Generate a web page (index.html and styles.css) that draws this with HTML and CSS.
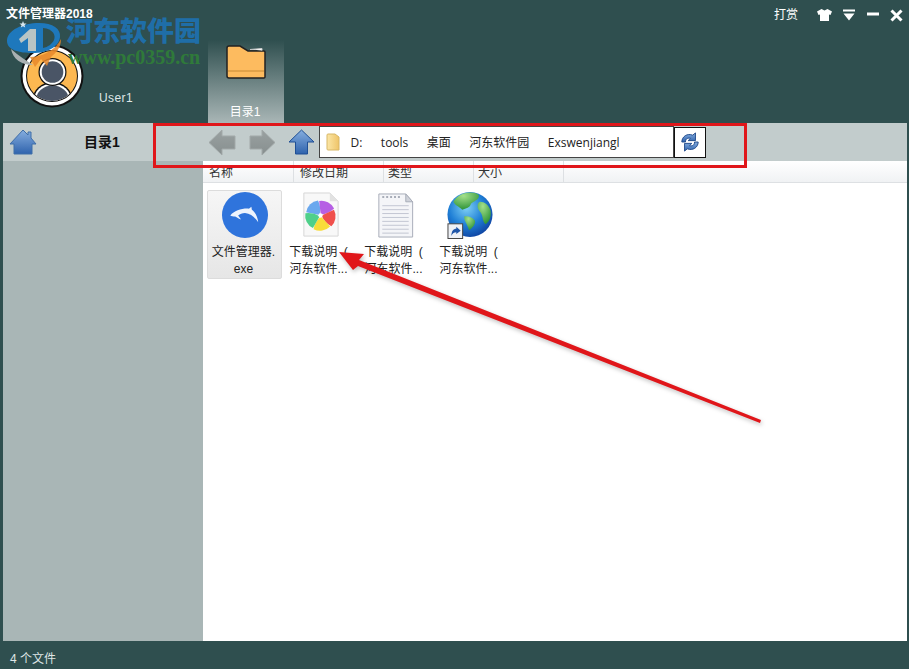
FILE: index.html
```html
<!DOCTYPE html>
<html lang="zh-CN">
  <head>
    <meta charset="UTF-8" />
    <title>文件管理器2018</title>
    <link rel="stylesheet" href="styles.css">
  </head>
  <body>
    <div class="app">
      <header class="top">
        <div class="title-row">
          <span class="app-title">文件管理器2018</span>
          <div class="win-btns">
            <span class="tip">打赏</span>
            <svg class="win-ico" width="15" height="12" viewBox="0 0 15 12"><path d="M4.500 0 L7.500 1.500 L10.500 0 L15 2.500 L13.500 6 L12 5.500 V12 H3 V5.500 L1.500 6 L0 2.500Z" fill="#fff"/></svg>
            <svg class="win-ico" width="12" height="12" viewBox="0 0 12 12"><path d="M0 0.500H12V2.500H0ZM0.500 4.500H11.500L6 11.500Z" fill="#fff"/></svg>
            <svg class="win-ico" width="12" height="12" viewBox="0 0 12 12"><path d="M0 3.500H12V6.500H0Z" fill="#fff"/></svg>
            <svg class="win-ico" width="13" height="13" viewBox="0 0 13 13"><path d="M1.500 1.500L11.500 11.500M11.500 1.500L1.500 11.500" stroke="#fff" stroke-width="3"/></svg>
          </div>
        </div>
        <div class="user-row">
          <div class="user">
            <svg class="avatar" width="64" height="64" viewBox="0 0 64 64">
              <defs>
                <clipPath id="faceClip"><circle cx="32" cy="32" r="25"/></clipPath>
              </defs>
              <circle cx="32" cy="32" r="31.500" fill="#111"/>
              <circle cx="32" cy="32" r="29.500" fill="#fff"/>
              <circle cx="32" cy="32" r="26" fill="#111"/>
              <circle cx="32" cy="32" r="25" fill="#fdb851"/>
              <g clip-path="url(#faceClip)">
                <ellipse cx="32.500" cy="56" rx="20" ry="18" fill="#111"/>
                <ellipse cx="32.500" cy="56" rx="18.500" ry="16.500" fill="#fff"/>
                <ellipse cx="32.500" cy="56" rx="16.500" ry="14.500" fill="#4a5566"/>
              </g>
              <circle cx="32.500" cy="28" r="14" fill="#111"/>
              <circle cx="32.500" cy="28" r="12.800" fill="#fff"/>
              <circle cx="32.500" cy="28" r="10.800" fill="#4a5566"/>
            </svg>
            <span class="user-name">User1</span>
          </div>
          <div class="tab">
            <svg width="40" height="34" viewBox="0 0 40 34">
              <path d="M1 3 Q1 1 3 1 H14 L22 6 H38 Q39 6 39 7 V32 Q39 33 38 33 H3 Q1 33 1 31Z" fill="#fdbb5f" stroke="#222" stroke-width="1.500"/>
              <path d="M2 26 H38" stroke="#d99a42" stroke-width="1.500"/>
              <path d="M24 4.500 L36 3.500 V5.500" fill="#fff" stroke="#ccc" stroke-width="1"/>
            </svg>
            <span class="tab-label">目录1</span>
          </div>
        </div>
      </header>

      <div class="main">
        <aside class="side">
          <div class="side-head">
            <svg width="28" height="26" viewBox="0 0 28 26">
              <defs>
                <linearGradient id="blueV" x1="0" y1="0" x2="0" y2="1">
                  <stop offset="0" stop-color="#86aedf"/>
                  <stop offset="1" stop-color="#2f63ad"/>
                </linearGradient>
                <linearGradient id="greyV" x1="0" y1="0" x2="0" y2="1">
                  <stop offset="0" stop-color="#9aa1a1"/>
                  <stop offset="1" stop-color="#878f8f"/>
                </linearGradient>
                <linearGradient id="folderH" x1="0" y1="0" x2="1" y2="0">
                  <stop offset="0" stop-color="#fbe6a6"/>
                  <stop offset="1" stop-color="#efc468"/>
                </linearGradient>
                <radialGradient id="globeFill" cx=".42" cy=".35" r=".7">
                  <stop offset="0" stop-color="#7fd0f5"/>
                  <stop offset=".55" stop-color="#1f7fd6"/>
                  <stop offset="1" stop-color="#0e3f9e"/>
                </radialGradient>
                <radialGradient id="landFill" cx=".4" cy=".2" r=".9">
                  <stop offset="0" stop-color="#a4e08a"/>
                  <stop offset="1" stop-color="#1f8a2e"/>
                </radialGradient>
              </defs>
              <path d="M14 1 L19 6 V3 H22 V9 L27 15 H23 V25 H5 V15 H1Z" fill="url(#blueV)" stroke="#3f6ea8"/>
            </svg>
            <span class="side-title">目录1</span>
          </div>
        </aside>

        <section class="content">
          <div class="toolbar">
            <div class="nav">
              <svg width="28" height="27" viewBox="0 0 28 27"><path d="M1 13.500 L14 1 V7 H27 V20 H14 V26Z" fill="url(#greyV)" stroke="#a2a9a9"/></svg>
              <svg width="27" height="27" viewBox="0 0 27 27"><path d="M26 13.500 L13 1 V7 H1 V20 H13 V26Z" fill="url(#greyV)" stroke="#a2a9a9"/></svg>
              <svg class="nav-up" width="27" height="26" viewBox="0 0 27 26"><path d="M13.500 1 L26 13 H19.500 V25 H7.500 V13 H1Z" fill="url(#blueV)" stroke="#1f4f95"/></svg>
            </div>
            <div class="path-box">
              <svg class="path-folder" width="14" height="18" viewBox="0 0 14 18"><path d="M1 2 Q1 1 2 1 H9 L13 4 V17 H2 Q1 17 1 16Z" fill="url(#folderH)" stroke="#d8b766"/></svg>
              <span>D:</span>
              <span>tools</span>
              <span>桌面</span>
              <span>河东软件园</span>
              <span>Exswenjiangl</span>
            </div>
            <button class="refresh">
              <svg width="20" height="20" viewBox="0 0 22 22">
                <path d="M2 11 C2 5 8 1 14 3.500 L17 1 V9.500 H9 L11.500 7 C8 6 6 8 6 11Z" fill="url(#blueV)" stroke="#1c4688" stroke-width="1"/>
                <path d="M20 11 C20 17 14 21 8 18.500 L5 21 V12.500 H13 L10.500 15 C14 16 16 14 16 11Z" fill="url(#blueV)" stroke="#1c4688" stroke-width="1"/>
              </svg>
            </button>
          </div>

          <div class="columns">
            <div class="col col-name">名称</div>
            <div class="col col-date">修改日期</div>
            <div class="col col-type">类型</div>
            <div class="col col-size">大小</div>
          </div>

          <div class="files">
            <div class="file selected">
              <svg width="48" height="48" viewBox="0 0 48 48">
                <circle cx="24" cy="23.500" r="23.500" fill="#2f74dc"/>
                <path d="M9 24 C13 19 21 16.500 28 17 L30.500 15 L31 18 C35 21 37 26 37.500 31 C34 26 30 22 24 21.500 C21 21.500 19 22.500 17 24 L20 28 C17 27 15 25.500 14 25 C12 25 10 25 9 24Z" fill="#fff" opacity=".92"/>
              </svg>
              <div class="file-name">文件管理器.<br>exe</div>
            </div>
            <div class="file">
              <svg width="48" height="48" viewBox="0 0 48 48">
                <path d="M7.500 1 H34 L42.500 9.500 V45 H7.500Z" fill="#f8f8f8" stroke="#d6d6d6"/>
                <path d="M34 1 V9.500 H42.500Z" fill="#e2e2e2"/>
                <g transform="translate(24.500 24) scale(1.100)">
                  <path d="M0 -1 L-4 -13 A 13 13 0 0 1 11 -9 Q 7 -3 0 -1Z" fill="#6aa8ee" transform="rotate(-60)"/>
                  <path d="M0 -1 L-4 -13 A 13 13 0 0 1 11 -9 Q 7 -3 0 -1Z" fill="#b65fe4" transform="rotate(12)"/>
                  <path d="M0 -1 L-4 -13 A 13 13 0 0 1 11 -9 Q 7 -3 0 -1Z" fill="#f0504c" transform="rotate(84)"/>
                  <path d="M0 -1 L-4 -13 A 13 13 0 0 1 11 -9 Q 7 -3 0 -1Z" fill="#f8dc3a" transform="rotate(156)"/>
                  <path d="M0 -1 L-4 -13 A 13 13 0 0 1 11 -9 Q 7 -3 0 -1Z" fill="#4fd08a" transform="rotate(228)"/>
                  <circle r="2" fill="#fff"/>
                </g>
              </svg>
              <div class="file-name">下载说明&nbsp; (<br>河东软件...</div>
            </div>
            <div class="file">
              <svg width="48" height="48" viewBox="0 0 48 48">
                <path d="M7.500 2 H35 L42 10 V46 H7.500Z" fill="#f4f5f8" stroke="#a8adb8"/>
                <path d="M35 2 V10 H42Z" fill="#cfd2da" stroke="#a8adb8"/>
                <path d="M11 14H38M11 18H38M11 22H38M11 26H38M11 30H38M11 34H38M11 38H38M11 42H38" stroke="#c2c6d2"/>
                <path d="M11 5H31" stroke="#a8adb8" stroke-dasharray="2 2" stroke-width="2"/>
              </svg>
              <div class="file-name">下载说明&nbsp; (<br>河东软件...</div>
            </div>
            <div class="file">
              <svg width="48" height="48" viewBox="0 0 48 48">
                <circle cx="24" cy="23" r="23" fill="url(#globeFill)"/>
                <path d="M11 5 C17 0 28 -1 33 3 C34 8 28 9 25 12 C24 16 20 17 16 18 C13 15 9 14 7 10 C8 8 9 7 11 5Z" fill="url(#landFill)"/>
                <path d="M34 10 C39 10 43 13 45 19 C46 25 44 30 40 33 C36 30 38 24 34 20 C31 16 31 12 34 10Z" fill="url(#landFill)"/>
                <path d="M18 25 C22 24 27 26 29 29 C30 33 26 37 23 39 C22 34 18 30 18 25Z" fill="url(#landFill)"/>
                <rect x="1.500" y="32.500" width="15" height="15" fill="#eef1f6" stroke="#444"/>
                <path d="M5 45 C5 40 7 37.500 10 37.500 V35.500 L14.500 39.500 L10 43 V41 C8 41 6 42 5 45Z" fill="#1f55a8"/>
              </svg>
              <div class="file-name">下载说明&nbsp; (<br>河东软件...</div>
            </div>
          </div>
        </section>
      </div>

      <footer class="status">4 个文件</footer>
    </div>

    <!-- watermark and annotation lie over the app -->
    <div class="mark">
      <svg class="mark-logo" width="58" height="50" viewBox="0 0 58 50">
        <path d="M6 30 C8 40 16 46 28 46 C22 42 14 37 6 30Z" fill="#a9b0b2"/>
        <path d="M2 22 C2 11 18 4 34 4 C48 4 56 10 55 18 C54 28 42 34 28 34 C14 34 2 31 2 22Z" fill="#1e78bc"/>
        <path d="M14 20 L25 10 H31 V32 H23 V19 L16 24Z" fill="#b8c4c4"/>
        <path d="M38 9 C48 10 51 16 49 21 C47 25 43 28 38 29Z" fill="#2f4f4f"/>
        <path d="M56 20 C56 30 50 34 46 38 L42 47 L36 40 L30 48 L25 38 C36 38 50 32 56 20Z" fill="#e8872a" opacity=".85"/>
        <path d="M18 2 L19 4.500 L21.500 4.500 L19.500 6.200 L20.200 8.500 L18 7.200 L15.800 8.500 L16.500 6.200 L14.500 4.500 L17 4.500Z" fill="#d6e6f0"/>
      </svg>
      <span class="mark-name">河东软件园</span>
      <span class="mark-url">www.pc0359.cn</span>
    </div>
    <div class="red-box"></div>
    <svg class="red-arrow" width="909" height="669" viewBox="0 0 909 669">
      <path d="M339 252 L364 254 L359 260 L761 420 L760 423 L358 266 L353 270Z" fill="#e0161a"/>
    </svg>
  </body>
</html>
```

FILE: styles.css
```css
* {
  box-sizing: border-box;
}

html,
body {
  height: 100%;
}

body {
  margin: 0;
  font-family: "Liberation Sans", "Noto Sans CJK SC", sans-serif;
  font-size: 12px;
  color: #222;
  overflow: hidden;
}

.app {
  display: flex;
  flex-direction: column;
  height: 669px;
  background-color: #2f4f4f;
}

.top {
  height: 123px;
  color: #fff;
  display: flex;
  flex-direction: column;
}

.title-row {
  height: 28px;
  display: flex;
  justify-content: space-between;
  padding: 4px 6px 0 6px;
}

.app-title {
  font-size: 12px;
  font-weight: bold;
}

.win-btns {
  display: flex;
  align-items: flex-start;
  gap: 11.5px;
}

.tip {
  font-size: 12px;
  margin: 1px 7px 0 0;
}

.win-ico {
  margin-top: 5px;
}

.user-row {
  display: flex;
  height: 95px;
}

.user {
  width: 208px;
  position: relative;
  padding: 16px 0 0 20px;
}

.user-name {
  position: absolute;
  left: 99px;
  top: 63px;
  font-size: 12px;
  letter-spacing: 0.4px;
  color: #dfe6e6;
}

.tab {
  width: 76px;
  margin-top: 12px;
  background: linear-gradient(#2f4f4f, #a9b6b6);
  display: flex;
  flex-direction: column;
  align-items: center;
  padding-top: 5px;
}

.tab-label {
  margin: 23px 2px 0 0;
  font-size: 12px;
  color: #fff;
}

.main {
  flex: 1;
  display: flex;
  padding: 0 2px 0 3px;
  min-height: 0;
}

.side {
  width: 200px;
  background-color: #a9b6b6;
}

.side-head {
  height: 38px;
  background-color: #c2cccc;
  display: flex;
  align-items: center;
  padding-left: 6px;
}

.side-title {
  margin: 0 0 2px 47px;
  font-size: 14px;
  font-weight: bold;
  color: #111;
}

.content {
  flex: 1;
  background-color: #fff;
  display: flex;
  flex-direction: column;
}

.toolbar {
  height: 38px;
  background-color: #c2cccc;
  display: flex;
  align-items: center;
  padding-left: 5px;
}

.nav {
  display: flex;
  align-items: center;
  gap: 13px;
  margin-right: 4px;
}

.nav-up {
  margin-left: -1px;
}

.path-box {
  width: 355px;
  height: 32px;
  background-color: #fff;
  border: 1px solid #444;
  display: flex;
  align-items: center;
  gap: 18.5px;
  padding-left: 6px;
  font-family: "Open Sans", "Noto Sans CJK SC", sans-serif;
  font-size: 12px;
  color: #222;
}

.path-box span {
  white-space: nowrap;
}

.path-folder {
  margin-right: -8px;
}

.refresh {
  width: 32px;
  height: 31px;
  padding: 0;
  background-color: #fff;
  border: 1px solid #111;
  display: flex;
  align-items: center;
  justify-content: center;
}

.columns {
  height: 22px;
  display: flex;
  background: linear-gradient(#fff, #f0f2f4);
  border-bottom: 1px solid #dde0e3;
}

.col {
  border-right: 1px solid #dde0e3;
  padding: 5px 0 0 6px;
  font-size: 12px;
  color: #333;
  line-height: 14px;
}

.col-name {
  width: 91px;
}

.col-date {
  width: 90px;
}

.col-type,
.col-size {
  width: 90px;
  padding-left: 4px;
}

.files {
  display: flex;
  padding: 7px 0 0 4px;
}

.file {
  width: 75px;
  height: 89px;
  display: flex;
  flex-direction: column;
  align-items: center;
  padding-top: 1px;
  border: 1px solid transparent;
  border-radius: 2px;
}

.file.selected {
  background: linear-gradient(#f6f6f6, #e6e6e6);
  border-color: #dcdcdc;
}

.file-name {
  margin-top: 5px;
  padding-right: 2px;
  text-align: center;
  font-size: 12px;
  line-height: 17px;
  color: #222;
  white-space: nowrap;
}

.status {
  height: 28px;
  padding: 8px 0 0 10px;
  color: #dfe6e6;
  font-size: 12px;
}

.mark {
  position: absolute;
  left: 5px;
  top: 12px;
  width: 200px;
  height: 56px;
  pointer-events: none;
}

.mark-logo {
  position: absolute;
  left: 0;
  top: 7px;
}

.mark-name {
  position: absolute;
  left: 61px;
  top: 4px;
  font-family: "Noto Sans CJK SC", sans-serif;
  font-size: 27px;
  line-height: 28px;
  font-weight: 900;
  color: #1f6ea8;
  white-space: nowrap;
}

.mark-url {
  position: absolute;
  left: 63px;
  top: 36px;
  font-family: "Liberation Serif", serif;
  font-size: 20px;
  line-height: 18px;
  font-weight: bold;
  color: #2f7a3a;
  white-space: nowrap;
}

.red-box {
  position: absolute;
  left: 153px;
  top: 123px;
  width: 594px;
  height: 45px;
  border: 3px solid #e0161a;
}

.red-arrow {
  position: absolute;
  left: 0;
  top: 0;
  pointer-events: none;
  filter: drop-shadow(1px 2px 2px rgba(0, 0, 0, 0.25));
}
```
